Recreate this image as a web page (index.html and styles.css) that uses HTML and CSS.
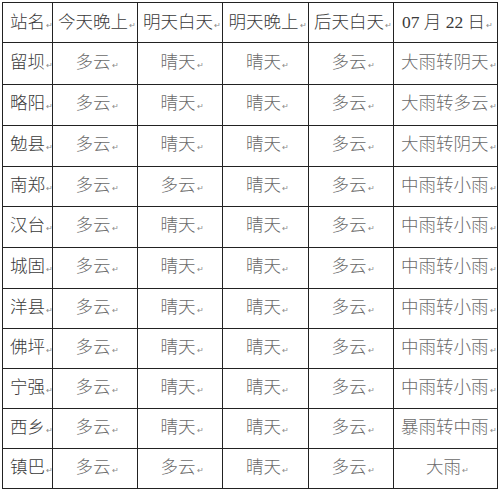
FILE: index.html
```html
<!DOCTYPE html>
<html lang="zh">
<head>
<meta charset="utf-8">
<link rel="stylesheet" href="styles.css">
</head>
<body>
<table class="wx">
<colgroup>
<col class="c1"><col class="c2"><col class="c3"><col class="c4"><col class="c5"><col class="c6">
</colgroup>
<tr class="h40 head">
<td class="name">站名<span class="pm">↵</span></td><td>今天晚上<span class="pm">↵</span></td><td>明天白天<span class="pm">↵</span></td><td>明天晚上<span class="pm">↵</span></td><td>后天白天<span class="pm">↵</span></td><td>07 月 22 日<span class="pm">↵</span></td>
</tr>
<tr class="h42"><td class="name">留坝<span class="pm">↵</span></td><td>多云<span class="pm">↵</span></td><td>晴天<span class="pm">↵</span></td><td>晴天<span class="pm">↵</span></td><td>多云<span class="pm">↵</span></td><td class="last">大雨转阴天<span class="pm">↵</span></td></tr>
<tr class="h41"><td class="name">略阳<span class="pm">↵</span></td><td>多云<span class="pm">↵</span></td><td>晴天<span class="pm">↵</span></td><td>晴天<span class="pm">↵</span></td><td>多云<span class="pm">↵</span></td><td class="last">大雨转多云<span class="pm">↵</span></td></tr>
<tr class="h41"><td class="name">勉县<span class="pm">↵</span></td><td>多云<span class="pm">↵</span></td><td>晴天<span class="pm">↵</span></td><td>晴天<span class="pm">↵</span></td><td>多云<span class="pm">↵</span></td><td class="last">大雨转阴天<span class="pm">↵</span></td></tr>
<tr class="h40"><td class="name">南郑<span class="pm">↵</span></td><td>多云<span class="pm">↵</span></td><td>多云<span class="pm">↵</span></td><td>晴天<span class="pm">↵</span></td><td>多云<span class="pm">↵</span></td><td class="last">中雨转小雨<span class="pm">↵</span></td></tr>
<tr class="h41"><td class="name">汉台<span class="pm">↵</span></td><td>多云<span class="pm">↵</span></td><td>晴天<span class="pm">↵</span></td><td>晴天<span class="pm">↵</span></td><td>多云<span class="pm">↵</span></td><td class="last">中雨转小雨<span class="pm">↵</span></td></tr>
<tr class="h41"><td class="name">城固<span class="pm">↵</span></td><td>多云<span class="pm">↵</span></td><td>晴天<span class="pm">↵</span></td><td>晴天<span class="pm">↵</span></td><td>多云<span class="pm">↵</span></td><td class="last">中雨转小雨<span class="pm">↵</span></td></tr>
<tr class="h40"><td class="name">洋县<span class="pm">↵</span></td><td>多云<span class="pm">↵</span></td><td>晴天<span class="pm">↵</span></td><td>晴天<span class="pm">↵</span></td><td>多云<span class="pm">↵</span></td><td class="last">中雨转小雨<span class="pm">↵</span></td></tr>
<tr class="h40"><td class="name">佛坪<span class="pm">↵</span></td><td>多云<span class="pm">↵</span></td><td>晴天<span class="pm">↵</span></td><td>晴天<span class="pm">↵</span></td><td>多云<span class="pm">↵</span></td><td class="last">中雨转小雨<span class="pm">↵</span></td></tr>
<tr class="h40"><td class="name">宁强<span class="pm">↵</span></td><td>多云<span class="pm">↵</span></td><td>晴天<span class="pm">↵</span></td><td>晴天<span class="pm">↵</span></td><td>多云<span class="pm">↵</span></td><td class="last">中雨转小雨<span class="pm">↵</span></td></tr>
<tr class="h40"><td class="name">西乡<span class="pm">↵</span></td><td>多云<span class="pm">↵</span></td><td>晴天<span class="pm">↵</span></td><td>晴天<span class="pm">↵</span></td><td>多云<span class="pm">↵</span></td><td class="last">暴雨转中雨<span class="pm">↵</span></td></tr>
<tr class="h40"><td class="name">镇巴<span class="pm">↵</span></td><td>多云<span class="pm">↵</span></td><td>多云<span class="pm">↵</span></td><td>晴天<span class="pm">↵</span></td><td>多云<span class="pm">↵</span></td><td>大雨<span class="pm">↵</span></td></tr>
</table>
</body>
</html>
```
FILE: styles.css
```css
html, body {
  margin: 0;
  padding: 0;
  background: #ffffff;
}
body {
  padding: 2px 0 0 2px;
  font-family: "Liberation Serif", "Noto Sans CJK SC", serif;
}
.wx {
  border-collapse: separate;
  border-spacing: 0;
  table-layout: fixed;
  width: 496px;
  border-top: 1px solid #222;
  border-left: 1px solid #222;
}
.c1 { width: 50px; }
.c2 { width: 85px; }
.c3 { width: 85px; }
.c4 { width: 86px; }
.c5 { width: 85px; }
.c6 { width: 104px; }
.wx td {
  box-sizing: border-box;
  border-right: 1px solid #222;
  border-bottom: 1px solid #222;
  padding: 0 0 0 4px;
  text-align: center;
  vertical-align: middle;
  font-size: 17.5px;
  font-weight: 300;
  color: #6a6a6a;
  white-space: nowrap;
  overflow: visible;
  line-height: 20px;
}
.wx td.name {
  text-align: left;
  padding-left: 7px;
  color: #3a3a3a;
}
.wx td.last {
  text-align: left;
  padding-left: 7px;
}
.head td {
  color: #3a3a3a;
  padding-top: 3px;
}
.h40 td { height: 40px; }
.h41 td { height: 41px; }
.h42 td { height: 42px; }
.pm {
  font-family: "DejaVu Sans", sans-serif;
  font-size: 8px;
  color: #8a8a8a;
  margin-left: 1px;
  vertical-align: baseline;
}
```
